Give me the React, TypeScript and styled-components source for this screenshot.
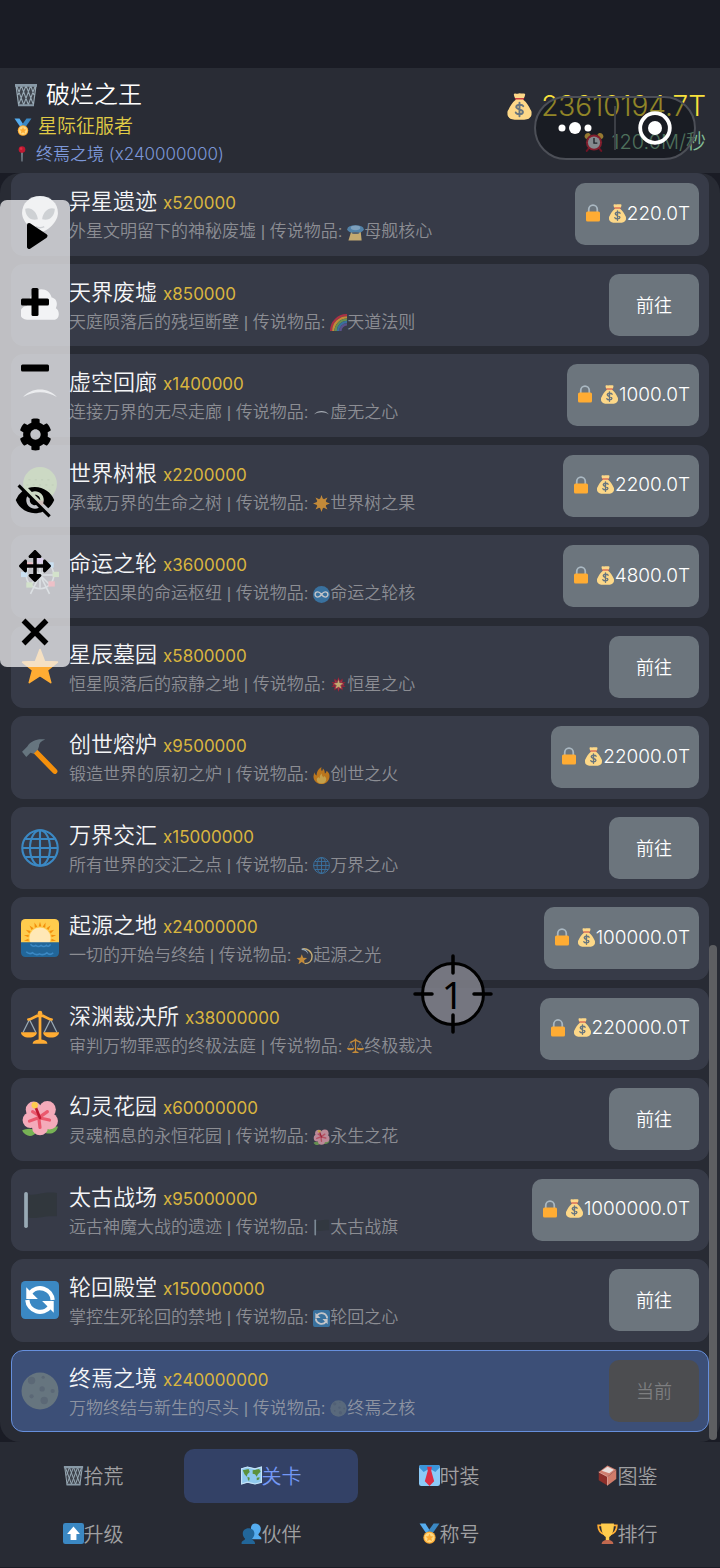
import React from "react";
import styled, { createGlobalStyle } from "styled-components";
import { MdVisibilityOff } from "react-icons/md";
import { FaArrowsAlt, FaCog } from "react-icons/fa";

const Global = createGlobalStyle`
  *, *::before, *::after { box-sizing: border-box; }
  body {
    margin: 0;
    background: #1a1c25;
    color: #f4f5f7;
    font-family: Inter, "Noto Sans CJK SC", sans-serif;
    font-weight: 350;
  }
  button { font: inherit; color: inherit; border: 0; cursor: pointer; }
`;

/* ---------- emoji artwork, all on a 36 × 36 grid ---------- */

const rays = (count: number, inner: number, outer: number, half: number, cx = 18, cy = 18) =>
  Array.from({ length: count }, (_, i) => {
    const a = (i * 2 * Math.PI) / count - Math.PI / 2;
    const p = (r: number, t: number) => `${(cx + r * Math.cos(t)).toFixed(2)} ${(cy + r * Math.sin(t)).toFixed(2)}`;
    return `M${p(inner, a - half)}L${p(outer, a)}L${p(inner, a + half)}Z`;
  }).join("");

const starPath = "M18 1.5l4.3 11.3 12.2.6-9.5 7.6 3.2 11.8L18 26.2 7.8 32.8 11 21 1.5 13.4l12.2-.6z";

const globe = (
  <g fill="none" stroke="#3b88c3" strokeWidth="2">
    <circle cx="18" cy="18" r="16.8" />
    <ellipse cx="18" cy="18" rx="9.5" ry="16.8" />
    <path d="M18 1v34M1 18h34M4 9.5h28M4 26.5h28" />
  </g>
);

const art = {
  basket: (
    <>
      <path fill="#99aab5" fillOpacity=".2" d="M3 4h30l-4 30H7z" />
      <g fill="none" stroke="#99aab5" strokeWidth="1.7">
        <path d="M4 4l11 30M11 4l11 30M18 4l11 28M25 4l5 14M32 4L21 34M25 4L14 34M18 4L7 32M11 4L6 18M3 4l4 30M33 4l-4 30" />
      </g>
      <path fill="#8899a6" d="M1.500 1.500h33v4h-33zM6 32h24v3H6z" />
    </>
  ),
  medal: (
    <>
      <path fill="#55acee" d="M1 1h10l9 14-6 5z" />
      <path fill="#3b88c3" d="M35 1H25L12 19l9 2z" />
      <circle cx="18" cy="25" r="10.500" fill="#ffac33" />
      <circle cx="18" cy="25" r="8.500" fill="#ffd983" />
      <path fill="#ffac33" d="M18 18l2 4.500 5 .5-3.800 3.300 1.200 5L18 28.700l-4.400 2.600 1.200-5L11 23l5-.5z" />
    </>
  ),
  pin: (
    <>
      <path fill="#99aab5" d="M16.500 13h3L19 34l-1 2-1-2z" />
      <circle cx="18" cy="8" r="7.500" fill="#be1931" />
      <circle cx="16" cy="6" r="3" fill="#dd2e44" />
    </>
  ),
  bag: (
    <>
      <path fill="#fdd888" d="M11 1c2-1 3 .5 4.500 0S18 0 19.500.500 23 0 25 1c1.500.8-.5 5-2 8 5 4 8 9 9.500 13 .8 1 2 3 1.500 5 .5 3-1 5.500-3 6.500-3 3-23 3-26 0-2-1-3.500-3.500-3-6.500-.5-2 .7-4 1.500-5C5 18 8 13 13 9c-1.500-3-3.500-7.200-2-8z" />
      <path fill="#be1931" d="M12.500 6.500h11c1.200 0 1.200 2 0 2h-11c-1.200 0-1.200-2 0-2z" opacity=".8" />
      <path fill="none" stroke="#67757f" strokeWidth="2.600" strokeLinecap="round" d="M23 17.500c-1-2.200-8.500-3-9.300.8-.7 4.200 9.300 2.700 8.900 7.200-.4 3.800-8.600 3.300-9.600.5M18 13v18" />
    </>
  ),
  clock: (
    <>
      <path fill="#ffcc4d" d="M1 9c0-5 4-8 8-7l3 3-8 8zM35 9c0-5-4-8-8-7l-3 3 8 8z" />
      <path stroke="#bb1a34" strokeWidth="3.500" strokeLinecap="round" d="M9 29l-4 5M27 29l4 5" />
      <circle cx="18" cy="19" r="14.500" fill="#dd2e44" />
      <circle cx="18" cy="19" r="11" fill="#e1e8ed" />
      <path fill="none" stroke="#31373d" strokeWidth="2.500" d="M18 11v9h6" />
    </>
  ),
  lock: (
    <>
      <path fill="none" stroke="#aab8c2" strokeWidth="3.500" d="M9.500 19v-8.500a8.500 8.500 0 0 1 17 0V19" />
      <rect x="4" y="15" width="28" height="20" rx="3" fill="#ffac33" />
    </>
  ),
  alien: (
    <>
      <path fill="#eef1f4" d="M18 1C8 1 1 8 1 17c0 8 10 18 17 18s17-10 17-18C35 8 28 1 18 1z" />
      <path fill="#66707a" d="M4 13c5-2 11 2 12 10C9 25 4 20 4 13zM32 13c-5-2-11 2-12 10 7 2 12-3 12-10z" />
      <path fill="none" stroke="#66707a" strokeWidth="1.500" d="M14 30c2 1.300 6 1.300 8 0" />
    </>
  ),
  cloud: <path fill="#f3f8fc" d="M6 32a6.500 6.500 0 0 1-.5-13C6 17 7 16 8 15c0-6 4-11 11-12 5 0 9 3 10 8 5 1 6 6 4 10 4 2 4 11-2 11z" />,
  arc: <path fill="#d5dce2" d="M2 20c8-9.500 24-9.500 32 0-10-6-22-6-32 0z" />,
  tree: (
    <>
      <path fill="#662113" d="M15 22h6l1 14h-8z" />
      <circle cx="18" cy="16" r="16" fill="#5c913b" />
      <path fill="none" stroke="#3e721d" strokeWidth="1.500" strokeDasharray="2 4" d="M7 12h22M5 17h26M8 22h21" />
    </>
  ),
  wheel: (
    <>
      <g fill="none" stroke="#99aab5" strokeWidth="1.500">
        <circle cx="18" cy="17" r="13" />
        <path d="M18 4v26M5 17h26M9 8l18 18M27 8L9 26M18 17L9 35M18 17l9 18" />
      </g>
      <g fill="#55acee"><rect x="0" y="14" width="6" height="5" /><rect x="25" y="5" width="6" height="5" /></g>
      <g fill="#dd2e44"><rect x="26" y="23" width="6" height="5" /><rect x="5" y="5" width="6" height="5" /></g>
      <g fill="#77b255"><rect x="5" y="24" width="6" height="5" /><rect x="30" y="14" width="6" height="5" /></g>
      <rect x="15" y="1" width="6" height="5" fill="#9266cc" />
    </>
  ),
  star: <path fill="#ffac33" stroke="#ffac33" strokeWidth="1.500" strokeLinejoin="round" d={starPath} />,
  hammer: (
    <>
      <path stroke="#f4900c" strokeWidth="5" strokeLinecap="round" d="M14 13l18 18.500" />
      <path fill="#66757f" d="M1 13l5-5c4-6 10-7.500 17-6.500-4 1.500-6 3.500-6 6.500l-1 3-4 4-3-1-4 4z" />
    </>
  ),
  globe,
  sunrise: (
    <>
      <path fill="#ffcc4d" d="M0 23V4a4 4 0 0 1 4-4h28a4 4 0 0 1 4 4v19z" />
      <path fill="#f4900c" d={rays(18, 11, 15.5, 0.12, 18, 18)} />
      <circle cx="18" cy="18" r="10" fill="#ffe8b6" />
      <path fill="#226699" d="M0 22h36v10a4 4 0 0 1-4 4H4a4 4 0 0 1-4-4z" />
      <path fill="none" stroke="#3b88c3" strokeWidth="1.500" d="M9 24q2.500 3 5 1 2.500 2 5 0 2.500 2 5 0 2 2 4-1M5 31q3 3 6 1 3 3 6.500 1 3.500 2 7-1 3 3 6 0" />
    </>
  ),
  scales: (
    <>
      <path fill="none" stroke="#99aab5" strokeWidth="1.200" d="M8 9L2 21M8 9l6 12M28 9l-6 12M28 9l6 12" />
      <path fill="#ffac33" d="M0 21h15c0 3-3 5-7.500 5S0 24 0 21zM21 21h15c0 3-3 5-7.500 5S21 24 21 21z" />
      <circle cx="18" cy="3" r="2.200" fill="#ffac33" />
      <path fill="none" stroke="#ffac33" strokeWidth="2.600" strokeLinecap="round" d="M7 9c4 0 6-4 11-4s7 4 11 4M18 5v25" />
      <path fill="#ffac33" d="M11 32c0-3 4-4 7-4s7 1 7 4z" />
    </>
  ),
  hibiscus: (
    <>
      <path fill="#77b255" d="M1 29c4-2 10-3 14 1-3 5-10 6-14-1zM21 30c3-5 9-5 14-5-1 6-8 9-14 5z" />
      <g fill="#f4abba">
        <circle cx="12" cy="9" r="7.500" />
        <circle cx="25" cy="9" r="8" />
        <circle cx="9" cy="19" r="7.500" />
        <circle cx="27" cy="20" r="8" />
        <circle cx="18" cy="26" r="7.500" />
        <circle cx="18" cy="16" r="9" />
      </g>
      <path stroke="#ea596e" strokeWidth="3" strokeLinecap="round" d="M18 16l7-5M18 17l9 2M17 18l1 8M16 17l-8 3M16 14l-5-3" />
      <path stroke="#be1931" strokeWidth="2.500" strokeLinecap="round" d="M18 17l-4-10" />
      <circle cx="13" cy="5" r="3" fill="#ffcc4d" />
    </>
  ),
  flag: (
    <>
      <path fill="#31373d" d="M7 3c8 2 14-3 27-1v22c-13-1-19 3-27 1z" />
      <rect x="3" y="1" width="3.500" height="34" rx="1.700" fill="#99aab5" />
    </>
  ),
  cycle: (
    <>
      <rect width="36" height="36" rx="4" fill="#3b88c3" />
      <path fill="none" stroke="#fff" strokeWidth="4" d="M8.500 11.500A12 12 0 0 1 30 18M27.500 24.500A12 12 0 0 1 6 18" />
      <path fill="#fff" d="M5 6v11h11l-3.600-3.600zM31 30V19H20l3.600 3.600z" />
    </>
  ),
  moon: (
    <>
      <circle cx="18" cy="18" r="17.500" fill="#66757f" />
      <g fill="#5b6876">
        <circle cx="10" cy="8" r="3.500" /><circle cx="20" cy="16" r="2.500" /><circle cx="22" cy="27" r="3.500" />
        <circle cx="10" cy="23" r="2" /><circle cx="30" cy="18" r="2" /><circle cx="21" cy="5" r="1.500" />
      </g>
    </>
  ),
  saucer: (
    <>
      <path fill="#ffd983" d="M9 16h20l2 19H3z" />
      <ellipse cx="18" cy="11" rx="17.500" ry="8.500" fill="#5d9fd0" />
      <ellipse cx="18" cy="8" rx="10" ry="5" fill="#9ccbee" />
      <ellipse cx="18" cy="19" rx="8" ry="2" fill="#66757f" />
    </>
  ),
  rainbow: (
    <g fill="none" strokeWidth="5">
      <path stroke="#dd2e44" d="M2.500 36A33 33 0 0 1 36 2.500" />
      <path stroke="#ffac33" d="M7 36A29 29 0 0 1 36 7" />
      <path stroke="#77b255" d="M12 36a24 24 0 0 1 24-24" />
      <path stroke="#3b88c3" d="M17 36a19 19 0 0 1 19-19" />
      <path stroke="#6b5ba8" d="M22 36a14 14 0 0 1 14-14" />
    </g>
  ),
  sun: (
    <>
      <path fill="#ffac33" d={rays(8, 10, 18, 0.3)} />
      <circle cx="18" cy="18" r="10.500" fill="#ffac33" />
    </>
  ),
  infinity: (
    <>
      <circle cx="18" cy="18" r="18" fill="#3b88c3" />
      <path fill="none" stroke="#fff" strokeWidth="3" d="M18 18c-3-4-5-5.500-8-5.500a5.500 5.500 0 0 0 0 11c3 0 5-1.500 8-5.500s5-5.500 8-5.500a5.500 5.500 0 0 1 0 11c-3 0-5-1.500-8-5.500z" />
    </>
  ),
  boom: (
    <>
      <path fill="#be1931" d={rays(10, 9, 16, 0.3)} />
      <path fill="#dd2e44" d={rays(8, 6, 13, 0.5)} />
      <path fill="#ffd983" transform="translate(7.200 7.200) scale(.6)" d={starPath} />
    </>
  ),
  fire: (
    <>
      <path fill="#f4900c" d="M35 19c0 10-7 17-17 17S1 29 1 20c0-3 1-6 3-9 0 4 1 6 4 7C7 11 12 3 18 0c-1 4-1 6 1 9 1-2 2-4 2-6 4 3 4 8 4 11 2-1 3-3 4-6 4 3 6 7 6 11z" />
      <path fill="#ffcc4d" d="M28 26c0 6-4 9-10 9S8 32 8 27c0-3 2-5 4-6 0 2 1 3 2 3 0-5 2-8 5-10-1 4 1 6 3 8 1-1 1-2 1-3 3 1 5 4 5 7z" />
    </>
  ),
  dizzy: (
    <>
      <path fill="none" stroke="#ffd983" strokeWidth="3" d="M14 2c10-2 20 6 20 16S27 33 19 33" />
      <path fill="#bdddf4" d="M12 1c7 0 13 5 14 12-3-6-8-9-14-9z" />
      <path fill="#ffac33" transform="translate(0 12) scale(.68)" d={starPath} />
    </>
  ),
  map: (
    <>
      <path fill="#8fc9ee" d="M0 6l11-3 13 3 12-3v27l-12 3-13-3-11 3z" />
      <path fill="#5c913b" d="M3 9l10-2 2 5-4 4-1 4-4-4zM11 20l4 2-1 5-2-1zM20 9l11-2 3 4-5 5-2 4-3-4-4-1zM27 22l5-1-1 4-4 1z" />
      <path fill="none" stroke="#c5e3f7" strokeWidth="2" d="M1 6.500l10-3 13 3 11-3v26l-11 3-13-3-10 3z" />
    </>
  ),
  tie: (
    <>
      <rect width="36" height="36" rx="4" fill="#8ccaf7" />
      <path fill="#3b94d9" d="M0 4a4 4 0 0 1 4-4h28a4 4 0 0 1 4 4l-8 8-10-6-10 6z" />
      <path fill="#dd2e44" d="M14 3h8l-1 7 5 18-8 8-8-8 5-18z" />
    </>
  ),
  books: (
    <>
      <path fill="#8c2f2a" d="M3 12l15 8v15L3 26z" />
      <path fill="#d07c6a" d="M18 20L33 8v16L18 35z" />
      <path fill="#cf7f70" d="M3 12L18 1l15 7-15 12z" />
      <path fill="#e8dedb" d="M8 10L18 3l11 5-8 6z" />
      <path fill="none" stroke="#e1a498" strokeWidth="1.500" d="M3 12l15 8v15" />
    </>
  ),
  up: (
    <>
      <rect width="36" height="36" rx="4" fill="#3b88c3" />
      <path fill="#fff" d="M18 6l11 13h-6v10H13V19H7z" />
    </>
  ),
  people: (
    <>
      <path fill="#55acee" d="M24 1c6 0 10 4 10 9 0 4-2 7-4 9-1 4 5 3 5 8v1H19L17 8c1-5 4-7 7-7z" />
      <path fill="#226699" d="M13 9c6 0 10 4 10 9 0 4-2 7-4 9 0 3 5 3 5 8v1H1v-2c0-4 6-4 6-7-2-2-4-5-4-9 0-5 4-9 10-9z" />
    </>
  ),
  trophy: (
    <>
      <path fill="none" stroke="#ffac33" strokeWidth="3" d="M9 4H2c0 8 3 14 12 16M27 4h7c0 8-3 14-12 16" />
      <path fill="#ffcc4d" d="M7 1h22c0 12-3 20-8 23v6h-6v-6C10 21 7 13 7 1z" />
      <path fill="#c1694f" d="M8 36c0-4 3-7 10-7s10 3 10 7z" />
    </>
  ),
};

type Art = keyof typeof art;

const EmojiSvg = styled.svg<{ $size: number }>`
  width: ${(p) => p.$size}px;
  height: ${(p) => p.$size}px;
  flex: none;
  display: block;
`;

const Emoji = ({ name, size }: { name: Art; size: number }) => (
  <EmojiSvg $size={size} viewBox="0 0 36 36" aria-hidden="true">
    {art[name]}
  </EmojiSvg>
);

/* ---------- page ---------- */

const Page = styled.div`
  min-height: 100vh;
  display: flex;
  flex-direction: column;
  padding: 68px 0 1px;
`;

const Header = styled.header`
  display: flex;
  justify-content: space-between;
  align-items: center;
  padding: 9px 14px 6px;
  background: #292c35;
`;

const HeaderSide = styled.div<{ $end?: boolean }>`
  display: flex;
  flex-direction: column;
  align-items: ${(p) => (p.$end ? "flex-end" : "flex-start")};
`;

const GameTitle = styled.h1`
  display: flex;
  align-items: center;
  gap: 8px;
  margin: 0;
  font-size: 24px;
  font-weight: 350;
  line-height: 36px;
  color: #fff;
`;

const Rank = styled.div`
  display: flex;
  align-items: center;
  gap: 6px;
  font-size: 19px;
  line-height: 28px;
  color: #e0cb45;
`;

const Place = styled.div`
  display: flex;
  align-items: center;
  gap: 6px;
  font-size: 17px;
  line-height: 26px;
  color: #7c97d8;
`;

const Money = styled.div`
  display: flex;
  align-items: center;
  gap: 8px;
  font-size: 28px;
  line-height: 40px;
  color: #f7e13c;
`;

const Income = styled.div`
  display: flex;
  align-items: center;
  gap: 8px;
  font-size: 20px;
  line-height: 32px;
  color: #83bd96;
`;

const Capsule = styled.div`
  position: absolute;
  top: 96px;
  right: 24px;
  width: 162px;
  height: 64px;
  display: flex;
  align-items: center;
  border: 2px solid #4c4f57;
  border-radius: 32px;
  background: rgba(4, 6, 12, 0.42);
`;

const CapsuleButton = styled.button`
  flex: 1;
  height: 44px;
  display: flex;
  align-items: center;
  justify-content: center;
  padding: 0;
  background: none;
  & + & {
    border-left: 2px solid #3c3f46;
  }
`;

const Main = styled.main`
  position: relative;
  flex: 1;
  display: flex;
  padding: 0 11px 10px;
  border-radius: 20px;
  background: #282b34;
`;

const List = styled.ul`
  flex: 1;
  min-width: 0;
  display: grid;
  grid-auto-rows: 1fr;
  gap: 8px;
  margin: 0;
  padding: 0;
  list-style: none;
`;

const Row = styled.li<{ $current?: boolean }>`
  display: flex;
  align-items: center;
  gap: 10px;
  padding: 7px 9px;
  border: 1px solid ${(p) => (p.$current ? "#668fdc" : "#373b48")};
  border-radius: 12px;
  background: ${(p) => (p.$current ? "#3c4f77" : "#373b48")};
`;

const RowText = styled.div`
  flex: 1;
  min-width: 0;
  padding-top: 4px;
`;

const RowTitle = styled.h2`
  display: flex;
  align-items: baseline;
  gap: 6px;
  margin: 0;
  font-size: 22px;
  font-weight: 350;
  line-height: 30px;
`;

const Multiplier = styled.span`
  font-size: 17px;
  font-weight: 400;
  color: #d9b53f;
`;

const Description = styled.p`
  display: flex;
  align-items: center;
  margin: 0;
  font-family: "Liberation Sans", "Noto Sans CJK SC", sans-serif;
  font-size: 17px;
  line-height: 28px;
  color: #b0b1b4;
  opacity: 0.7;
  white-space: pre;
`;

const ActionButton = styled.button<{ $wide?: boolean }>`
  display: flex;
  align-items: center;
  height: 62px;
  padding: 0 ${(p) => (p.$wide ? 9 : 27)}px 2px;
  border-radius: 10px;
  background: #6c757d;
  color: #fff;
  font-size: ${(p) => (p.$wide ? 19 : 18)}px;
  &:disabled {
    background: #4c4d50;
    color: #7e7f81;
    cursor: default;
  }
`;

const LockSlot = styled.span`
  margin-right: 6px;
`;

const ScrollThumb = styled.div`
  position: absolute;
  right: 3px;
  bottom: 2px;
  width: 8px;
  height: 39%;
  border-radius: 4px;
  background: #5e5f62;
`;

const Nav = styled.nav`
  display: grid;
  grid-template-columns: repeat(4, 1fr);
  gap: 4px;
  padding: 7px 6px 6px;
  background: #282b34;
`;

const Tab = styled.button<{ $active?: boolean }>`
  display: flex;
  align-items: center;
  justify-content: center;
  height: 54px;
  padding: 0 0 2px;
  border-radius: 10px;
  background: ${(p) => (p.$active ? "#334166" : "transparent")};
  color: ${(p) => (p.$active ? "#7398f5" : "#a0a0a2")};
  font-size: 20px;
`;

/* ---------- floating auto-click tools ---------- */

const ToolPanel = styled.div`
  position: absolute;
  top: 200px;
  left: 0;
  width: 70px;
  display: flex;
  flex-direction: column;
  padding: 3px 0 2px;
  border-radius: 7px;
  background: rgba(241, 241, 243, 0.75);
`;

const Tool = styled.button`
  height: 66px;
  display: flex;
  align-items: center;
  justify-content: center;
  padding: 0;
  background: none;
  color: #000;
`;

const Target = styled.button`
  position: absolute;
  top: 954px;
  left: calc(63% - 41px);
  width: 80px;
  height: 80px;
  display: grid;
  place-items: center;
  padding: 0;
  background: none;
  color: #000;
  font-family: "Noto Sans", sans-serif;
  font-size: 38px;
  font-weight: 400;
  line-height: 40px;
  & > * {
    grid-area: 1 / 1;
  }
`;

interface Level {
  icon: Art;
  name: string;
  rate: string;
  text: string;
  itemIcon: Art;
  item: string;
  price?: string;
  current?: boolean;
}

const levels: Level[] = [
  { icon: "alien", name: "异星遗迹", rate: "x520000", text: "外星文明留下的神秘废墟", itemIcon: "saucer", item: "母舰核心", price: "220.0T" },
  { icon: "cloud", name: "天界废墟", rate: "x850000", text: "天庭陨落后的残垣断壁", itemIcon: "rainbow", item: "天道法则" },
  { icon: "arc", name: "虚空回廊", rate: "x1400000", text: "连接万界的无尽走廊", itemIcon: "arc", item: "虚无之心", price: "1000.0T" },
  { icon: "tree", name: "世界树根", rate: "x2200000", text: "承载万界的生命之树", itemIcon: "sun", item: "世界树之果", price: "2200.0T" },
  { icon: "wheel", name: "命运之轮", rate: "x3600000", text: "掌控因果的命运枢纽", itemIcon: "infinity", item: "命运之轮核", price: "4800.0T" },
  { icon: "star", name: "星辰墓园", rate: "x5800000", text: "恒星陨落后的寂静之地", itemIcon: "boom", item: "恒星之心" },
  { icon: "hammer", name: "创世熔炉", rate: "x9500000", text: "锻造世界的原初之炉", itemIcon: "fire", item: "创世之火", price: "22000.0T" },
  { icon: "globe", name: "万界交汇", rate: "x15000000", text: "所有世界的交汇之点", itemIcon: "globe", item: "万界之心" },
  { icon: "sunrise", name: "起源之地", rate: "x24000000", text: "一切的开始与终结", itemIcon: "dizzy", item: "起源之光", price: "100000.0T" },
  { icon: "scales", name: "深渊裁决所", rate: "x38000000", text: "审判万物罪恶的终极法庭", itemIcon: "scales", item: "终极裁决", price: "220000.0T" },
  { icon: "hibiscus", name: "幻灵花园", rate: "x60000000", text: "灵魂栖息的永恒花园", itemIcon: "hibiscus", item: "永生之花" },
  { icon: "flag", name: "太古战场", rate: "x95000000", text: "远古神魔大战的遗迹", itemIcon: "flag", item: "太古战旗", price: "1000000.0T" },
  { icon: "cycle", name: "轮回殿堂", rate: "x150000000", text: "掌控生死轮回的禁地", itemIcon: "cycle", item: "轮回之心" },
  { icon: "moon", name: "终焉之境", rate: "x240000000", text: "万物终结与新生的尽头", itemIcon: "moon", item: "终焉之核", current: true },
];

const tabs: { icon: Art; label: string; active?: boolean }[] = [
  { icon: "basket", label: "拾荒" },
  { icon: "map", label: "关卡", active: true },
  { icon: "tie", label: "时装" },
  { icon: "books", label: "图鉴" },
  { icon: "up", label: "升级" },
  { icon: "people", label: "伙伴" },
  { icon: "medal", label: "称号" },
  { icon: "trophy", label: "排行" },
];

const LevelRow = ({ level }: { level: Level }) => (
  <Row $current={level.current}>
    <Emoji name={level.icon} size={38} />
    <RowText>
      <RowTitle>
        {level.name}
        <Multiplier>{level.rate}</Multiplier>
      </RowTitle>
      <Description>
        <span>{level.text} | 传说物品: </span>
        <Emoji name={level.itemIcon} size={17} />
        <span>{level.item}</span>
      </Description>
    </RowText>
    {level.price ? (
      <ActionButton type="button" $wide>
        <LockSlot>
          <Emoji name="lock" size={18} />
        </LockSlot>
        <Emoji name="bag" size={19} />
        {level.price}
      </ActionButton>
    ) : (
      <ActionButton type="button" disabled={level.current}>
        {level.current ? "当前" : "前往"}
      </ActionButton>
    )}
  </Row>
);

export default function App() {
  return (
    <>
      <Global />
      <Page>
        <Header>
          <HeaderSide>
            <GameTitle>
              <Emoji name="basket" size={24} />
              破烂之王
            </GameTitle>
            <Rank>
              <Emoji name="medal" size={18} />
              星际征服者
            </Rank>
            <Place>
              <Emoji name="pin" size={16} />
              终焉之境 (x240000000)
            </Place>
          </HeaderSide>
          <HeaderSide $end>
            <Money>
              <Emoji name="bag" size={27} />
              23610194.7T
            </Money>
            <Income>
              <Emoji name="clock" size={20} />
              120.0M/秒
            </Income>
          </HeaderSide>
        </Header>
        <Main>
          <List>
            {levels.map((level) => (
              <LevelRow key={level.name} level={level} />
            ))}
          </List>
          <ScrollThumb />
        </Main>
        <Nav>
          {tabs.map((tab) => (
            <Tab key={tab.label} type="button" $active={tab.active}>
              <Emoji name={tab.icon} size={21} />
              {tab.label}
            </Tab>
          ))}
        </Nav>
      </Page>

      <Capsule>
        <CapsuleButton type="button" aria-label="更多">
          <svg width="36" height="14" viewBox="0 0 36 14" fill="#fff">
            <circle cx="5" cy="7" r="3.500" />
            <circle cx="18" cy="7" r="6" />
            <circle cx="31" cy="7" r="3.500" />
          </svg>
        </CapsuleButton>
        <CapsuleButton type="button" aria-label="关闭小程序">
          <svg width="34" height="34" viewBox="0 0 34 34">
            <circle cx="17" cy="17" r="14.800" fill="none" stroke="#fff" strokeWidth="3.800" />
            <circle cx="17" cy="17" r="7" fill="#fff" />
          </svg>
        </CapsuleButton>
      </Capsule>

      <ToolPanel>
        <Tool type="button" aria-label="开始">
          <svg width="30" height="30" viewBox="0 0 30 30">
            <path d="M9 4L25.500 15 9 26z" fill="#000" stroke="#000" strokeWidth="4" strokeLinejoin="round" />
          </svg>
        </Tool>
        <Tool type="button" aria-label="添加">
          <svg width="30" height="30" viewBox="0 0 30 30" fill="#000">
            <rect x="1" y="11.500" width="28" height="7" rx="1.500" />
            <rect x="11.500" y="1" width="7" height="28" rx="1.500" />
          </svg>
        </Tool>
        <Tool type="button" aria-label="移除">
          <svg width="30" height="30" viewBox="0 0 30 30" fill="#000">
            <rect x="1" y="11.500" width="28" height="7" rx="1.500" />
          </svg>
        </Tool>
        <Tool type="button" aria-label="设置">
          <FaCog size={33} />
        </Tool>
        <Tool type="button" aria-label="隐藏">
          <MdVisibilityOff size={42} />
        </Tool>
        <Tool type="button" aria-label="移动">
          <FaArrowsAlt size={32} />
        </Tool>
        <Tool type="button" aria-label="关闭">
          <svg width="30" height="30" viewBox="0 0 30 30">
            <path d="M3.500 3.500l23 23M26.500 3.500l-23 23" stroke="#000" strokeWidth="5.400" />
          </svg>
        </Tool>
      </ToolPanel>

      <Target type="button" aria-label="点击目标 1">
        <svg width="80" height="80" viewBox="0 0 80 80" stroke="#000" strokeLinecap="round">
          <circle cx="40" cy="40" r="30.500" fill="#80818b" fillOpacity=".85" strokeWidth="3" />
          <path d="M2 40h17M61 40h17M40 2v17M40 61v17" strokeWidth="3.500" />
        </svg>
        <span>1</span>
      </Target>
    </>
  );
}
